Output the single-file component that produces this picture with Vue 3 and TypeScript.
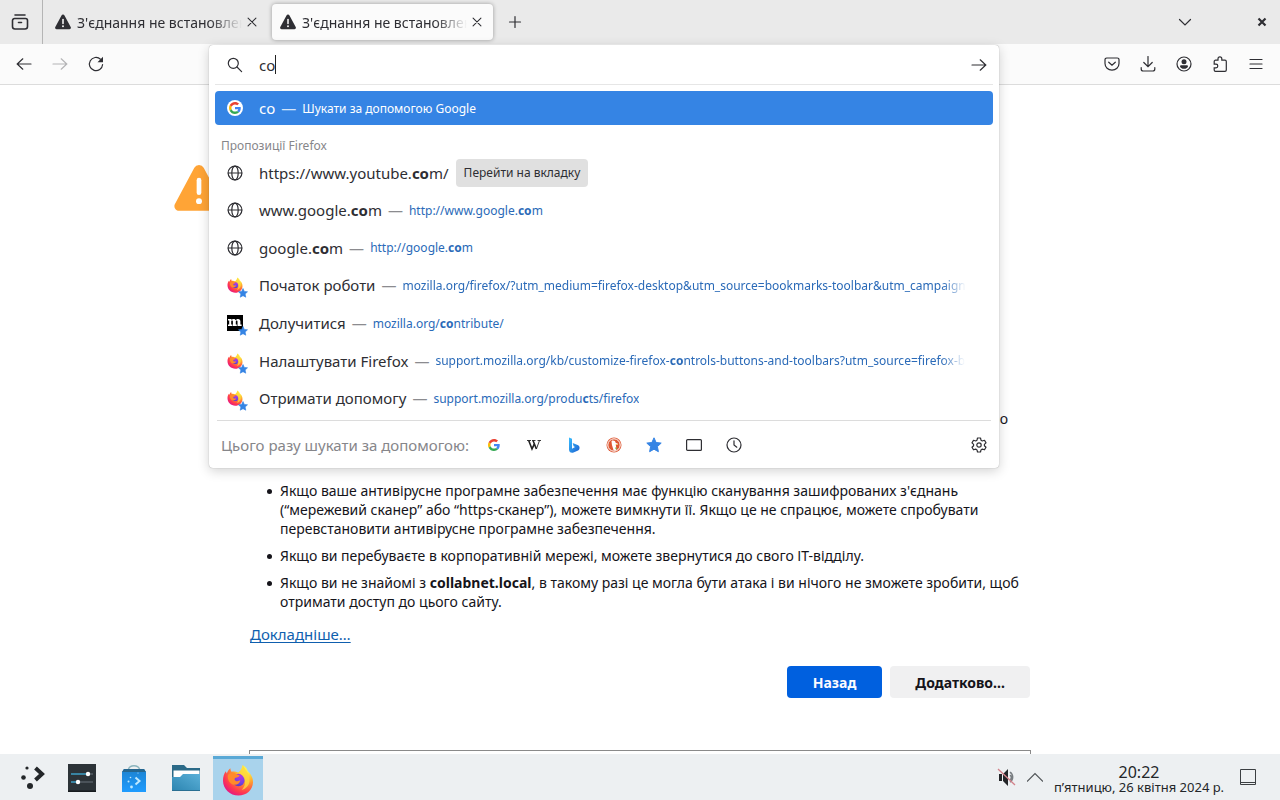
<script setup lang="ts">
import { ref } from 'vue'

interface Part { text: string; bold?: boolean }
interface Row { icon: string; title: Part[]; url?: Part[]; action?: string; star?: boolean; faded?: boolean }

const query = ref('co')
const tabs = [
  { id: 1, title: "З'єднання не встановлено: ймовірна загроза", active: false },
  { id: 2, title: "З'єднання не встановлено: ймовірна загроза", active: true },
]
const co: Part = { text: 'co', bold: true }
const rows: Row[] = [
  { icon: 'globe', title: [{ text: 'https://www.youtube.' }, co, { text: 'm/' }], action: 'Перейти на вкладку' },
  { icon: 'globe', title: [{ text: 'www.google.' }, co, { text: 'm' }], url: [{ text: 'http://www.google.' }, co, { text: 'm' }] },
  { icon: 'globe', title: [{ text: 'google.' }, co, { text: 'm' }], url: [{ text: 'http://google.' }, co, { text: 'm' }] },
  { icon: 'firefox', star: true, faded: true, title: [{ text: 'Початок роботи' }], url: [{ text: 'mozilla.org/firefox/?utm_medium=firefox-desktop&utm_source=bookmarks-toolbar&utm_campaign' }] },
  { icon: 'mozilla', star: true, title: [{ text: 'Долучитися' }], url: [{ text: 'mozilla.org/' }, co, { text: 'ntribute/' }] },
  { icon: 'firefox', star: true, faded: true, title: [{ text: 'Налаштувати Firefox' }], url: [{ text: 'support.mozilla.org/kb/customize-firefox-' }, co, { text: 'ntrols-buttons-and-toolbars?utm_source=firefox-b' }] },
  { icon: 'firefox', star: true, title: [{ text: 'Отримати допомогу' }], url: [{ text: 'support.mozilla.org/produ' }, { text: 'c', bold: true }, { text: 'ts/firefox' }] },
]
const engines = [
  { icon: 'google', label: 'Google' },
  { icon: 'wikipedia', label: 'Wikipedia' },
  { icon: 'bing', label: 'Bing' },
  { icon: 'duck', label: 'DuckDuckGo' },
  { icon: 'star', label: 'Закладки' },
  { icon: 'tabs', label: 'Вкладки' },
  { icon: 'clock', label: 'Історія' },
]
const tools = [
  { icon: 'pocket', label: 'Pocket' },
  { icon: 'download', label: 'Завантаження' },
  { icon: 'account', label: 'Обліковий запис' },
  { icon: 'puzzle', label: 'Розширення' },
  { icon: 'menu', label: 'Меню' },
]
const apps = [
  { icon: 'settings', label: 'Системні параметри', active: false },
  { icon: 'discover', label: 'Discover', active: false },
  { icon: 'folder', label: 'Dolphin', active: false },
  { icon: 'firefox', label: 'Firefox', active: true },
]
</script>

<template>
  <svg class="sprite" aria-hidden="true">
    <defs>
      <radialGradient id="fx-body" cx="0.8" cy="0.12" r="1">
        <stop offset="0.1" stop-color="#fff44f" />
        <stop offset="0.38" stop-color="#ffb52e" />
        <stop offset="0.6" stop-color="#ff7139" />
        <stop offset="0.8" stop-color="#ff3750" />
        <stop offset="1" stop-color="#e31587" />
      </radialGradient>
      <radialGradient id="fx-core" cx="0.65" cy="0.2" r="0.9">
        <stop offset="0" stop-color="#b833e1" />
        <stop offset="0.6" stop-color="#7542e5" />
        <stop offset="1" stop-color="#4a3cc0" />
      </radialGradient>
      <linearGradient id="bag" x1="0" y1="0" x2="0" y2="1">
        <stop offset="0" stop-color="#1c82d0" />
        <stop offset="1" stop-color="#1f9cff" />
      </linearGradient>
      <linearGradient id="fold" x1="0" y1="1" x2="1" y2="0">
        <stop offset="0" stop-color="#2b84b0" />
        <stop offset="1" stop-color="#5bb0d8" />
      </linearGradient>
      <linearGradient id="bing-fill" x1="0" y1="0" x2="1" y2="1">
        <stop offset="0" stop-color="#37bdff" />
        <stop offset="0.5" stop-color="#2b8fe6" />
        <stop offset="1" stop-color="#1b5fd0" />
      </linearGradient>
    </defs>
    <symbol id="i-warning" viewBox="0 0 16 16">
      <path fill="currentColor" d="M6.500 1.500a1.700 1.700 0 0 1 3 0l6.200 11.600a1.500 1.500 0 0 1-1.300 2.200H1.600A1.500 1.500 0 0 1 .3 13.100z" />
      <path d="M8 5.500v4" fill="none" stroke="#fff" stroke-width="1.500" stroke-linecap="round" />
      <circle cx="8" cy="12.200" r="0.950" fill="#fff" />
    </symbol>
    <symbol id="i-close" viewBox="0 0 16 16"><path d="M3.500 3.500l9 9M12.500 3.500l-9 9" class="line" /></symbol>
    <symbol id="i-plus" viewBox="0 0 16 16"><path d="M8 2.500v11M2.500 8h11" class="line" /></symbol>
    <symbol id="i-view" viewBox="0 0 18 18"><path d="M4 2h10M3.500 5.500h11a2 2 0 0 1 2 2v6a2.500 2.500 0 0 1-2.500 2.500H4a2.500 2.500 0 0 1-2.500-2.500v-6a2 2 0 0 1 2-2zM7.500 9.500h3" fill="none" stroke="currentColor" stroke-width="1.600" stroke-linecap="round" /></symbol>
    <symbol id="i-chevron" viewBox="0 0 16 16"><path d="M2.500 5.500L8 11l5.500-5.500" class="line" /></symbol>
    <symbol id="i-bold-close" viewBox="0 0 16 16"><path d="M4.500 4.500l7 7M11.500 4.500l-7 7" fill="none" stroke="currentColor" stroke-width="2.200" /></symbol>
    <symbol id="i-back" viewBox="0 0 16 16"><path d="M15 8H1.500M6.800 2.800L1.200 8l5.600 5.200" class="line" /></symbol>
    <symbol id="i-forward" viewBox="0 0 16 16"><path d="M1 8h13.500M9.200 2.800L14.800 8l-5.600 5.200" class="line" /></symbol>
    <symbol id="i-reload" viewBox="0 0 16 16"><path d="M14.600 8.500A6.600 6.600 0 1 1 12.500 3.200" class="line" /><path d="M15 .8v5.500H9.500z" fill="currentColor" /></symbol>
    <symbol id="i-search" viewBox="0 0 16 16"><circle cx="6.300" cy="6.300" r="5" class="line" /><path d="M10 10l4.600 4.600" class="line" /></symbol>
    <symbol id="i-pocket" viewBox="0 0 16 16"><path d="M2.700 2h10.600A1.700 1.700 0 0 1 15 3.700V7.500a7 6.700 0 0 1-14 0V3.700A1.700 1.700 0 0 1 2.700 2zM4.700 6.200L8 9.300l3.300-3.100" class="line" /></symbol>
    <symbol id="i-download" viewBox="0 0 16 16"><path d="M8 .5V10.500M3.800 6.500L8 10.700l4.200-4.200M1.200 11.500v1.500a2 2 0 0 0 2 2h9.600a2 2 0 0 0 2-2v-1.500" class="line" /></symbol>
    <symbol id="i-account" viewBox="0 0 16 16"><circle cx="8" cy="8" r="7" class="line" /><circle cx="8" cy="5.800" r="2.500" fill="currentColor" /><path d="M4 10.200a1 1 0 0 1 1-.9h6a1 1 0 0 1 1 .9c0 1.500-2 2.600-4 2.600s-4-1.100-4-2.600z" fill="currentColor" /></symbol>
    <symbol id="i-puzzle" viewBox="0 0 16 16"><path d="M6 4.200V2.800a1.900 1.900 0 0 1 3.800 0V4.200H13a1.300 1.300 0 0 1 1.300 1.300V14a1.300 1.300 0 0 1-1.300 1.300H3.500A1.300 1.300 0 0 1 2.200 14v-2.200H4a1.800 1.800 0 0 0 0-3.600H2.200V5.500A1.300 1.300 0 0 1 3.500 4.200z" class="line" /></symbol>
    <symbol id="i-menu" viewBox="0 0 16 16"><path d="M2 3.500h12M2 8h12M2 12.500h12" class="line" /></symbol>
    <symbol id="i-globe" viewBox="0 0 16 16"><circle cx="8" cy="8" r="6.900" class="line" /><ellipse cx="8" cy="8" rx="3.200" ry="6.900" class="line" /><path d="M1.300 8h13.400" class="line" /></symbol>
    <symbol id="i-google" viewBox="0 0 48 48">
      <path fill="#ea4335" d="M24 9.500c3.540 0 6.710 1.220 9.210 3.600l6.850-6.850C35.900 2.380 30.470 0 24 0 14.620 0 6.510 5.380 2.560 13.220l7.980 6.190C12.430 13.720 17.740 9.500 24 9.500z" />
      <path fill="#4285f4" d="M46.980 24.550c0-1.570-.15-3.090-.38-4.550H24v9.020h12.940c-.58 2.960-2.260 5.480-4.780 7.180l7.730 6c4.510-4.180 7.090-10.360 7.090-17.650z" />
      <path fill="#fbbc05" d="M10.530 28.590c-.48-1.450-.76-2.990-.76-4.590s.27-3.140.76-4.590l-7.980-6.190C.92 16.460 0 20.120 0 24c0 3.880.92 7.540 2.560 10.780l7.970-6.190z" />
      <path fill="#34a853" d="M24 48c6.480 0 11.930-2.130 15.890-5.810l-7.730-6c-2.150 1.450-4.920 2.300-8.160 2.300-6.260 0-11.570-4.220-13.470-9.910l-7.980 6.190C6.510 42.620 14.620 48 24 48z" />
    </symbol>
    <symbol id="i-wikipedia" viewBox="0 0 16 16"><path d="M1 3.500h4M6 3.500h3.500M11.500 3.500H15" fill="none" stroke="#222" stroke-width="0.900" /><path d="M2.700 3.500l3.300 8.500L8.300 7M7 3.500l3.400 8.500" fill="none" stroke="#222" stroke-width="1.600" /><path d="M6 12l2.400-5.500M10.400 12l3.100-8.500" fill="none" stroke="#222" stroke-width="0.900" /></symbol>
    <symbol id="i-bing" viewBox="0 0 16 16"><path fill="url(#bing-fill)" d="M3 .5l3 1.200v10l3-1.700-1.400-.8L6.700 6l5.500 2.200A2.800 2.800 0 0 1 13.500 11c0 1.200-.5 2-1.400 2.600L7.500 15.600C5 16.500 3 15 3 12.500z" /></symbol>
    <symbol id="i-duck" viewBox="0 0 16 16"><circle cx="8" cy="8" r="7.500" fill="#de5833" /><circle cx="8" cy="8" r="6.200" fill="none" stroke="#fff" stroke-width="1" /><path d="M5.500 4c1.500-1 4-.3 4.300 2 1 .3 2.200.3 2 1.200-.2.700-1.300.7-2 .8.400 1.500.5 3.500.4 5.200-1.200.4-2.200.3-2.600.1C7 11 5.700 8 5.700 6z" fill="#fff" /><path d="M9.500 7l2.500.2-2 .8z" fill="#f6c02d" /><path d="M9.300 10.200l2 1-1.800 1z" fill="#65bc46" /></symbol>
    <symbol id="i-star" viewBox="0 0 16 16"><path fill="#3584e4" stroke="#3584e4" stroke-linejoin="round" d="M8 .8l2.100 4.700 5.100.6-3.800 3.500 1 5.100L8 12.200l-4.400 2.500 1-5.100L.8 6.100l5.100-.6z" /></symbol>
    <symbol id="i-tabs" viewBox="0 0 16 16"><rect x="0.600" y="2.600" width="14.800" height="10.800" rx="1" class="line" /></symbol>
    <symbol id="i-clock" viewBox="0 0 16 16"><circle cx="8" cy="8" r="7" class="line" /><path d="M8 3.800V8l2.800 2.200" class="line" /></symbol>
    <symbol id="i-gear" viewBox="0 0 16 16"><path d="M6.500 1h3l.5 2.200 1.300.8 2.200-.7 1.500 2.600L13.400 7.400v1.300l1.600 1.500-1.500 2.600-2.200-.7-1.300.8-.5 2.100h-3l-.5-2.100-1.300-.8-2.200.7L1 10.200l1.600-1.500V7.400L1 5.900l1.500-2.600 2.200.7L6 3.200z" class="line" stroke-linejoin="round" /><circle cx="8" cy="8" r="2.200" class="line" /></symbol>
    <symbol id="i-mozilla" viewBox="0 0 16 16"><path d="M0 0h16v16H0z" fill="#000" /><path fill="#fff" d="M1 4h3.500v1.200C5 4.300 5.800 3.900 6.700 3.900c1 0 1.700.5 2 1.400.6-.9 1.400-1.400 2.400-1.400 1.500 0 2.300.9 2.300 2.400v3.200h1.200V11H10.500V6.600c0-.7-.2-1-.7-1s-1 .5-1 1.300v2.600h1V11H5.900V6.600c0-.7-.2-1-.7-1-.6 0-1 .5-1 1.300v2.600h1.200V11H1V9.500h1.200v-4H1z" /></symbol>
    <symbol id="i-firefox" viewBox="0 0 32 32">
      <path fill="url(#fx-body)" d="M20.500 1c3.500 1.800 4.700 4.200 5.200 6.200 2.800 2.300 5.600 6.300 5.300 11.300C30.600 26.200 24.300 31.500 16.500 31.500 8 31.500 1 25 1 16.700c0-3.600 1-7 2.800-9.400.3 1 .7 1.800 1 2.200.7-2.300 2-4.200 3.600-5.300 0 1.600.5 2.700 1.300 3.600 2-.5 4.500-.2 6.500.8 1.500-1 3.700-3.500 4.300-7.600z" />
      <circle cx="16.500" cy="16" r="6.200" fill="url(#fx-core)" />
      <path fill="#ff8a2a" d="M6 11c2-2.600 5.500-3 8-1.300 1 .7 2 1.300 3.600 1.500-.1 1.500-2.200 2.100-4 2.500-1.300.3-1.500 2.300.2 3.200 1.400.7 3.300.2 4.500-.8-.3 3-2.800 5-6 4.700C8 20.500 5 15.500 6 11z" />
      <path fill="#ffd83b" opacity="0.8" d="M21 2c3 4.200 7 8 6.500 15-.4 5-4.200 8-7.800 9 3.400-3.500 4.800-9 1.300-13.500-1.300-1.600-3-2.800-5-3.400 2.400-1 4.200-3.700 5-7.100z" />
    </symbol>
    <symbol id="i-launcher" viewBox="0 0 24 24"><g fill="#232629"><circle cx="6" cy="3" r="1.600" /><circle cx="2.500" cy="12.500" r="2.300" /><circle cx="9" cy="21" r="3" /></g><path d="M14.500 3l6.500 6-6.500 6" fill="none" stroke="#232629" stroke-width="4" /></symbol>
    <symbol id="i-settings" viewBox="0 0 28 28"><path d="M0 0h28v28H0z" fill="#2c3338" /><path d="M0 26.500h28V28H0z" fill="#171b1e" /><path d="M3 10h17M3 18h7" stroke="#3d9fc4" stroke-width="1.500" /><path d="M10 18h15M20 10h5" stroke="#69737a" stroke-width="1.200" /><circle cx="20" cy="10" r="2.200" fill="#fff" /><circle cx="10" cy="18" r="2.200" fill="#fff" /></symbol>
    <symbol id="i-discover" viewBox="0 0 28 28"><path d="M8.500 5C10 .5 18 .5 19.500 5" fill="none" stroke="#8bb4bd" stroke-width="1.500" /><path d="M4 5h20l2 3v20H2V8z" fill="url(#bag)" /><path d="M4 5h20l2 3H2z" fill="#25668f" /><path d="M15.500 13.500l4 3.500-4 3.500" fill="none" stroke="#bfe9ff" stroke-width="2" /><g fill="#bfe9ff"><circle cx="10.500" cy="13.500" r=".8" /><circle cx="8.500" cy="17.500" r="1" /><circle cx="11.500" cy="23" r="1.400" /><circle cx="18" cy="9" r=".6" /></g></symbol>
    <symbol id="i-folder" viewBox="0 0 30 28"><path d="M1 1h12l3 3h13v10H1z" fill="#2b6a88" /><path d="M2.500 6.500h26V16h-26z" fill="#fff" /><path d="M1 13h8l3-3h17v17H1z" fill="url(#fold)" /><path d="M1 26h28v1H1z" fill="#2a6f92" /></symbol>
    <symbol id="i-mute" viewBox="0 0 20 20"><path d="M2 7h3v7H2zM6 7l5-5v17l-5-5z" fill="#232629" /><path d="M13 5a6 6 0 0 1 0 10M13 8a3 3 0 0 1 0 5" fill="none" stroke="#777c80" stroke-width="1.500" /><path d="M1 2l17 16" stroke="#d3838c" stroke-width="1.300" /></symbol>
    <symbol id="i-up" viewBox="0 0 16 16"><path d="M0 12.500l8-8 8 8" fill="none" stroke="#4d5154" stroke-width="1.100" /></symbol>
    <symbol id="i-desktop" viewBox="0 0 16 16"><path d="M.5.5h15v15H.5zM1 13.500h14" fill="none" stroke="#3b3f42" /></symbol>
  </svg>

  <div class="desktop">
    <header class="tabbar">
      <button class="view" aria-label="Firefox View"><svg width="18" height="18"><use href="#i-view" /></svg></button>
      <div v-for="tab in tabs" :key="tab.id" class="tab" :class="{ active: tab.active }">
        <svg width="16" height="16"><use href="#i-warning" /></svg>
        <span class="tab-title">{{ tab.title }}</span>
        <button class="icon-btn tab-close" aria-label="Закрити вкладку"><svg width="14" height="14"><use href="#i-close" /></svg></button>
      </div>
      <button class="icon-btn new-tab" aria-label="Нова вкладка"><svg width="16" height="16"><use href="#i-plus" /></svg></button>
      <span class="grow"></span>
      <button class="icon-btn list-tabs" aria-label="Список вкладок"><svg width="16" height="16"><use href="#i-chevron" /></svg></button>
      <button class="icon-btn" aria-label="Закрити"><svg width="16" height="16"><use href="#i-bold-close" /></svg></button>
    </header>

    <nav class="toolbar">
      <div class="nav-buttons">
        <button class="icon-btn" aria-label="Назад"><svg width="16" height="16"><use href="#i-back" /></svg></button>
        <button class="icon-btn" aria-label="Вперед" disabled><svg width="16" height="16"><use href="#i-forward" /></svg></button>
        <button class="icon-btn" aria-label="Оновити"><svg width="16" height="16"><use href="#i-reload" /></svg></button>
      </div>
      <div class="urlbar-slot">
        <section class="urlbar">
          <div class="field">
            <svg width="16" height="16"><use href="#i-search" /></svg>
            <input v-model="query" class="query" type="text" aria-label="Пошук або адреса" />
            <span class="caret"></span>
            <span class="grow"></span>
            <button class="go" aria-label="Перейти"><svg width="16" height="16"><use href="#i-forward" /></svg></button>
          </div>
          <div class="selected">
            <span class="disc"><svg width="12" height="12"><use href="#i-google" /></svg></span>
            <span class="row-title">{{ query }}</span>
            <span class="dash">—</span>
            <span class="hint">Шукати за допомогою Google</span>
          </div>
          <h2 class="group">Пропозиції Firefox</h2>
          <ul class="rows">
            <li v-for="(row, i) in rows" :key="i" class="row">
              <span class="favicon">
                <svg width="16" height="16"><use :href="'#i-' + row.icon" /></svg>
                <svg v-if="row.star" class="badge" width="10" height="10"><use href="#i-star" /></svg>
              </span>
              <span class="row-title"><span v-for="(p, j) in row.title" :key="j" :class="{ bold: p.bold }">{{ p.text }}</span></span>
              <template v-if="row.url">
                <span class="dash">—</span>
                <span class="url" :class="{ faded: row.faded }"><span v-for="(p, j) in row.url" :key="j" :class="{ bold: p.bold }">{{ p.text }}</span></span>
              </template>
              <button v-if="row.action" class="switch">{{ row.action }}</button>
            </li>
          </ul>
          <footer class="oneoffs">
            <span class="oneoff-label">Цього разу шукати за допомогою:</span>
            <button v-for="e in engines" :key="e.icon" class="engine" :aria-label="e.label"><svg :width="e.icon === 'google' ? 12 : 16" :height="e.icon === 'google' ? 12 : 16"><use :href="'#i-' + e.icon" /></svg></button>
            <span class="grow"></span>
            <button class="go" aria-label="Налаштування пошуку"><svg width="16" height="16"><use href="#i-gear" /></svg></button>
          </footer>
        </section>
      </div>
      <div class="tools">
        <button v-for="t in tools" :key="t.icon" class="icon-btn" :aria-label="t.label"><svg width="16" height="16"><use :href="'#i-' + t.icon" /></svg></button>
      </div>
    </nav>

    <main class="page">
      <article class="error">
        <svg class="alert" width="50" height="50"><use href="#i-warning" /></svg>
        <p class="tail">о</p>
        <ul class="advice">
          <li>Якщо ваше антивірусне програмне забезпечення має функцію сканування зашифрованих з'єднань (“мережевий сканер” або “https-сканер”), можете вимкнути її. Якщо це не спрацює, можете спробувати перевстановити антивірусне програмне забезпечення.</li>
          <li>Якщо ви перебуваєте в корпоративній мережі, можете звернутися до свого ІТ-відділу.</li>
          <li>Якщо ви не знайомі з <b>collabnet.local</b>, в такому разі це могла бути атака і ви нічого не зможете зробити, щоб отримати доступ до цього сайту.</li>
        </ul>
        <a class="more" href="#">Докладніше…</a>
        <div class="actions">
          <button class="primary">Назад</button>
          <button class="secondary">Додатково…</button>
        </div>
        <div class="details"></div>
      </article>
    </main>

    <footer class="taskbar">
      <button class="launcher" aria-label="Меню програм"><svg width="24" height="24"><use href="#i-launcher" /></svg></button>
      <button v-for="a in apps" :key="a.icon" class="task" :class="{ active: a.active }" :aria-label="a.label"><svg :width="a.active ? 32 : 30" :height="a.active ? 32 : 28"><use :href="'#i-' + a.icon" /></svg></button>
      <span class="grow"></span>
      <button class="tray" aria-label="Гучність"><svg width="20" height="20"><use href="#i-mute" /></svg></button>
      <button class="tray" aria-label="Показати приховане"><svg width="16" height="16"><use href="#i-up" /></svg></button>
      <div class="clock">
        <span class="time">20:22</span>
        <span class="date">п’ятницю, 26 квітня 2024 р.</span>
      </div>
      <button class="tray show" aria-label="Показати стільницю"><svg width="16" height="16"><use href="#i-desktop" /></svg></button>
    </footer>
  </div>
</template>

<style>
body {
  margin: 0;
}
.line {
  fill: none;
  stroke: currentColor;
  stroke-width: 1.2;
  stroke-linecap: round;
}
</style>

<style scoped>
* {
  box-sizing: border-box;
}
.sprite {
  position: absolute;
  width: 0;
  height: 0;
}
.desktop {
  display: flex;
  flex-direction: column;
  height: 100vh;
  overflow: hidden;
  background: #fff;
  color: #2e2e33;
  font-family: "Noto Sans", "Open Sans", sans-serif;
  font-size: 15px;
}
button {
  padding: 0;
  border: 0;
  background: none;
  color: inherit;
  font: inherit;
}
svg {
  display: block;
  flex: none;
}
.grow {
  flex: 1;
}
.icon-btn {
  display: flex;
  align-items: center;
  justify-content: center;
  width: 36px;
  height: 36px;
}
.tabbar {
  display: flex;
  align-items: center;
  flex: none;
  height: 44px;
  background: #eaeaea;
}
.view {
  display: flex;
  align-items: center;
  justify-content: center;
  width: 43px;
  height: 44px;
  margin-right: 2px;
  padding-right: 3px;
  border-right: 1px solid #b5b5b5;
}
.tab {
  display: flex;
  align-items: center;
  width: 221px;
  height: 36px;
  margin: 0 2px;
  padding: 0 6px 0 8px;
  border-radius: 4px;
}
.tab.active {
  background: #fbfbfb;
  box-shadow: 0 0 4px rgba(0, 0, 0, 0.35);
}
.tab-title {
  flex: 1;
  overflow: hidden;
  margin-left: 6px;
  font-size: 14px;
  white-space: nowrap;
  mask-image: linear-gradient(to left, transparent, #000 32px);
}
.tab-close {
  width: 20px;
  height: 20px;
}
.new-tab {
  margin-left: 2px;
}
.list-tabs {
  margin-right: 41px;
}
.toolbar {
  display: flex;
  align-items: center;
  flex: none;
  height: 41px;
  border-bottom: 1px solid #dcdcdc;
  background: #fbfbfb;
}
.nav-buttons {
  display: flex;
  width: 209px;
  padding-left: 6px;
}
.nav-buttons .icon-btn:disabled {
  color: #b4b4b6;
}
.urlbar-slot {
  position: relative;
  flex: 1;
  align-self: stretch;
}
.urlbar {
  position: absolute;
  z-index: 2;
  top: 1px;
  right: 0;
  left: 0;
  border-radius: 4px;
  background: #fff;
  box-shadow: 0 0 1px rgba(0, 0, 0, 0.4), 0 3px 12px rgba(0, 0, 0, 0.18);
}
.field {
  display: flex;
  align-items: center;
  height: 40px;
  margin: 0 6px 6px;
  padding: 0 6px 0 12px;
  border-bottom: 1px solid #e6e6e6;
}
.query {
  field-sizing: content;
  min-width: 0;
  margin: 0 0 0 16px;
  padding: 0;
  border: 0;
  outline: 0;
  background: none;
  color: inherit;
  font: inherit;
}
.caret {
  width: 1px;
  height: 19px;
  background: #222;
}
.selected {
  display: flex;
  align-items: center;
  height: 34px;
  margin: 0 6px;
  padding: 0 12px;
  border-radius: 4px;
  background: #3584e4;
  color: #fff;
}
.disc {
  display: flex;
  align-items: center;
  justify-content: center;
  width: 16px;
  height: 16px;
  border-radius: 50%;
  background: #fff;
}
.row-title {
  flex: none;
  margin-left: 16px;
  white-space: nowrap;
}
.dash {
  flex: none;
  margin: 0 6px;
  color: #8b8b8f;
}
.selected .dash {
  color: #d5e5fa;
}
.hint,
.url {
  font-size: 12px;
  white-space: nowrap;
}
.group {
  margin: 12px 12px 0;
  color: #86868a;
  font-size: 12px;
  font-weight: 400;
  line-height: 17px;
}
.rows {
  display: grid;
  grid-auto-rows: 1fr;
  height: 263px;
  margin: 0 8px;
  padding: 0;
  list-style: none;
}
.row {
  display: flex;
  align-items: center;
  min-width: 0;
  padding: 0 4px 0 10px;
}
.favicon {
  position: relative;
}
.badge {
  position: absolute;
  right: -5px;
  bottom: -5px;
}
.bold {
  font-weight: 700;
}
.url {
  overflow: hidden;
  color: #2a6ab8;
}
.url.faded {
  mask-image: linear-gradient(to left, transparent, #000 24px);
}
.switch {
  height: 28px;
  margin-left: 7px;
  padding: 0 8px;
  border-radius: 4px;
  background: #e0e0e0;
  font-size: 12px;
}
.oneoffs {
  display: flex;
  align-items: center;
  height: 48px;
  margin: 3px 8px 0;
  padding: 0 4px;
  border-top: 1px solid #dcdcdc;
}
.oneoff-label {
  width: 253px;
  color: #86868a;
  white-space: nowrap;
}
.engine {
  display: flex;
  align-items: center;
  justify-content: center;
  width: 40px;
  height: 36px;
}
.tools {
  display: flex;
  width: 281px;
  padding-left: 95px;
}
.page {
  flex: 1;
  min-height: 0;
  overflow: hidden;
  color: #15141a;
}
.error {
  position: relative;
  max-width: 780px;
  margin: 0 auto;
  padding-top: 324px;
  font-size: 14px;
  line-height: 19px;
}
.alert {
  position: absolute;
  top: 78px;
  left: -76px;
  color: #ffa436;
}
.tail {
  margin: 0 22px 53px;
  text-align: right;
}
.advice {
  margin: 0 0 14px;
  padding-left: 30px;
  list-style: none;
}
.advice li {
  position: relative;
}
.advice li::before {
  content: "";
  position: absolute;
  top: 8px;
  left: -13px;
  width: 5px;
  height: 5px;
  border-radius: 50%;
  background: #15141a;
}
.advice li + li {
  margin-top: 8px;
}
.more {
  color: #0f5fae;
  font-size: 15px;
  text-underline-offset: 2px;
}
.actions {
  display: flex;
  justify-content: flex-end;
  gap: 8px;
  margin-top: 22px;
}
.actions button {
  height: 32px;
  border-radius: 4px;
  font-weight: 700;
}
.primary {
  padding: 0 26px;
  background: #0060df;
  color: #fbfbfe;
}
.secondary {
  padding: 0 25px;
  background: #f0f0f1;
}
.details {
  height: 60px;
  margin: 52px -1px 0;
  border: 1px solid #8a8a8a;
}
.taskbar {
  position: relative;
  display: flex;
  align-items: center;
  flex: none;
  height: 46px;
  padding-left: 11px;
  background: #edf0f2;
  color: #232629;
}
.launcher {
  display: flex;
  justify-content: center;
  width: 44px;
}
.task {
  display: flex;
  align-items: center;
  justify-content: center;
  width: 50px;
  height: 44px;
  margin-left: 2px;
  align-self: flex-end;
}
.task.active {
  border-top: 3px solid #5aa9d6;
  background: #a9d3ec;
}
.tray {
  display: flex;
  align-items: center;
  justify-content: center;
  width: 28px;
  height: 44px;
}
.clock {
  display: flex;
  flex-direction: column;
  align-items: center;
  width: 180px;
  padding-top: 3px;
}
.time {
  font-size: 16px;
  line-height: 16px;
}
.date {
  font-size: 13px;
  line-height: 14px;
  white-space: nowrap;
}
.show {
  width: 38px;
  margin-right: 13px;
}
</style>
